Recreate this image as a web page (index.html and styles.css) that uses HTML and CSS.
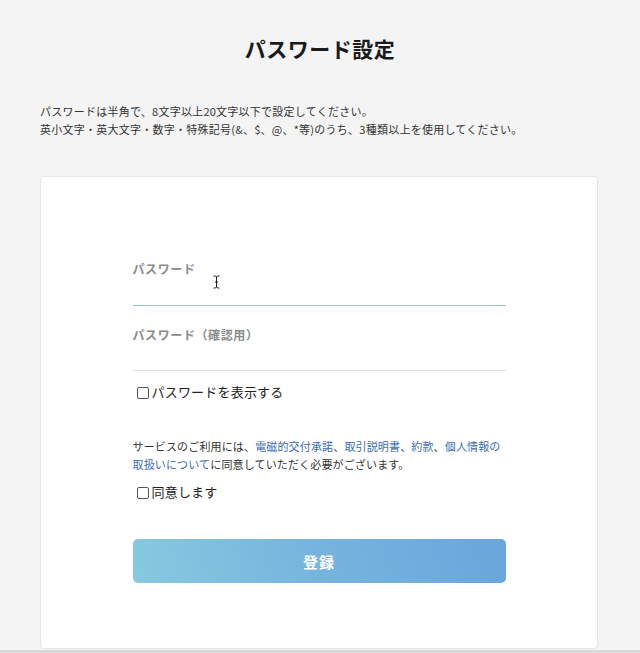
FILE: index.html
```html
<!DOCTYPE html>
<html lang="ja">
<head>
<meta charset="utf-8">
<title>パスワード設定</title>
<link rel="stylesheet" href="styles.css">
</head>
<body>
<div class="page">
  <h1 class="title">パスワード設定</h1>
  <p class="desc">パスワードは半角で、8文字以上20文字以下で設定してください。<br>英小文字・英大文字・数字・特殊記号(&amp;、$、@、*等)のうち、3種類以上を使用してください。</p>
  <div class="card">
    <form class="form">
      <div class="field field-active">
        <label class="label">パスワード</label>
        <div class="input"></div>
        <svg class="cursor" width="7" height="14" viewBox="0 0 7 14"><path d="M0.5 1 H2.5 L3.5 2 L4.5 1 H6.5 M3.5 2 V12 M0.5 13 H2.5 L3.5 12 L4.5 13 H6.5 M2 7 H5" fill="none" stroke="#222" stroke-width="1"/></svg>
      </div>
      <div class="field">
        <label class="label">パスワード（確認用）</label>
        <div class="input"></div>
      </div>
      <label class="check check-show"><span class="box"></span>パスワードを表示する</label>
      <p class="terms">サービスのご利用には、<span class="link">電磁的交付承諾</span>、<span class="link">取引説明書</span>、<span class="link">約款</span>、<span class="link">個人情報の取扱いについて</span>に同意していただく必要がございます。</p>
      <label class="check check-agree"><span class="box"></span>同意します</label>
      <button type="button" class="submit">登録</button>
    </form>
  </div>
</div>
<div class="footer-line"></div>
</body>
</html>
```
FILE: styles.css
```css
html, body {
  margin: 0;
  padding: 0;
  background: #f4f4f4;
  font-family: "Noto Sans CJK JP", "Noto Sans", sans-serif;
  color: #333;
}
.page {
  padding: 0 40px;
}
.title {
  margin: 0;
  padding-top: 36px;
  font-size: 21px;
  line-height: 24px;
  font-weight: 700;
  text-align: center;
  color: #1a1a1a;
  letter-spacing: 0.5px;
}
.desc {
  margin: 42px 0 0;
  font-size: 11px;
  line-height: 18px;
  letter-spacing: 0.25px;
  color: #333;
}
.card {
  margin-top: 38px;
  width: 558px;
  box-sizing: border-box;
  background: #fff;
  border: 1px solid #e6e6e6;
  border-radius: 4px;
  padding: 83px 0 65px;
}
.form {
  width: 373px;
  margin: 0 auto;
  display: flex;
  flex-direction: column;
}
.field {
  position: relative;
  display: flex;
  flex-direction: column;
}
.field + .field {
  margin-top: 20px;
}
.label {
  font-size: 12px;
  line-height: 18px;
  font-weight: 700;
  color: #8a8a8a;
  letter-spacing: 0.6px;
}
.input {
  height: 26px;
  border-bottom: 1px solid #e2e2e2;
}
.field-active .input {
  height: 27px;
  border-bottom-color: #93c3dc;
}
.cursor {
  position: absolute;
  left: 80px;
  top: 15px;
}
.check {
  display: flex;
  align-items: center;
  font-size: 13px;
  line-height: 20px;
  color: #222;
  letter-spacing: 0.2px;
}
.box {
  width: 10px;
  height: 10px;
  border: 1px solid #555;
  border-radius: 2px;
  margin: 1px 3px 0 4px;
  background: #fff;
}
.check-show {
  margin-top: 11px;
}
.terms {
  margin: 35px 0 0;
  font-size: 11px;
  line-height: 18px;
  letter-spacing: 0.15px;
  color: #333;
}
.link {
  color: #3c6db4;
}
.check-agree {
  margin-top: 9px;
}
.submit {
  margin-top: 37px;
  height: 44px;
  border: none;
  border-radius: 5px;
  background: linear-gradient(75deg, #87c9df 0%, #76b4de 50%, #6aa5dc 100%);
  color: #fff;
  font-family: inherit;
  font-size: 15px;
  font-weight: 700;
  letter-spacing: 1px;
}
.footer-line {
  height: 3px;
  margin-top: 1px;
  background: #d8d8d8;
}
```
